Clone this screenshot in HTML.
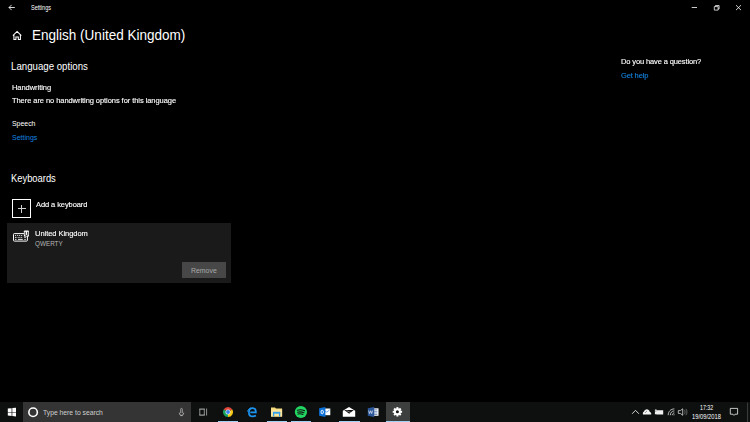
<!DOCTYPE html>
<html><head><meta charset="utf-8">
<style>
html,body{margin:0;padding:0;}
body{width:750px;height:422px;background:#000;position:relative;overflow:hidden;font-family:"Liberation Sans",sans-serif;color:#fff;}
.a{position:absolute;white-space:nowrap;line-height:1;}
[id^=t_]{will-change:transform;-webkit-text-stroke:0.12px currentColor;}
#t_title,#t_langopt,#t_kb{-webkit-text-stroke:0;will-change:auto;}
#t_speech,#t_sset,#t_rm,#t_search,#t_qw,#t_settings,#t_time,#t_date{will-change:auto;-webkit-text-stroke:0;}
svg.a{overflow:visible;}
</style></head><body>
<!-- title bar -->
<svg class="a" style="left:0;top:0" width="750" height="16">
 <path d="M9 7.5H14.8M11.6 4.9L9 7.5L11.6 10.1" stroke="#fff" stroke-width="0.85" fill="none"/>
 <path d="M691.7 7.5H697" stroke="#fff" stroke-width="0.8"/>
 <path d="M714.3 6.6H718.1V10.1H714.3Z M715.5 6.6V5.5H719.1V9H718.1" stroke="#fff" stroke-width="0.75" fill="none"/>
 <path d="M736 5.2L741 10.1M741 5.2L736 10.1" stroke="#fff" stroke-width="0.8"/>
</svg>
<!-- home icon -->
<svg class="a" style="left:0;top:0" width="40" height="50">
 <path d="M12.9 35.7L17.1 31.5L21.3 35.7M13.9 34.8V39.5H15.9V37H18.3V39.5H20.4V34.8" stroke="#fff" stroke-width="1.05" fill="none" stroke-linejoin="miter"/>
</svg>
<!-- add keyboard box -->
<div class="a" style="left:12px;top:199px;width:16.8px;height:17px;border:1.5px solid #fff"></div>
<div class="a" style="left:17.8px;top:208.4px;width:7.9px;height:1px;background:#d0d0d0"></div>
<div class="a" style="left:21.3px;top:205px;width:1px;height:7.6px;background:#d0d0d0"></div>
<!-- card -->
<div class="a" style="left:7px;top:223px;width:223.8px;height:59.7px;background:#1a1a1a"></div>
<svg class="a" style="left:0;top:0" width="40" height="250">
 <rect x="13.5" y="233.6" width="13.9" height="7.5" rx="0.8" stroke="#fff" stroke-width="1" fill="none"/>
 <path d="M23.9 236.6V231.3Q23.9 230.4 24.8 230.4H28Q28.9 230.4 28.9 231.3V236.6Z" fill="#fff"/>
 <path d="M25.2 231.8V234.6Q25.2 235.4 26 235.4H26.9Q27.7 235.4 27.7 234.6V231.8" stroke="#000" stroke-width="0.85" fill="none"/>
 <path d="M15.1 235.5h1M17.2 235.5h1M19.2 235.5h1M21.2 235.5h1M15 237.4h1.5M17.7 237.4h1M19.4 237.4h1M21.2 237.4h1M24.3 237.4h1.5M15 239.4h1.5M18 239.4h4.8M24.3 239.4h1.5" stroke="#fff" stroke-width="0.9"/>
</svg>
<div class="a" style="left:181.9px;top:262.1px;width:44.1px;height:15.9px;background:#474747"></div>
<!-- taskbar -->
<div class="a" style="left:0;top:402.3px;width:750px;height:19.7px;background:#0e1010"></div>
<div class="a" style="left:22.9px;top:402.3px;width:168.6px;height:19.7px;background:#343434"></div>
<div class="a" style="left:386px;top:402.3px;width:24px;height:19.7px;background:#3d3f3f"></div>
<!-- underlines -->
<div class="a" style="left:218px;top:420.8px;width:20.3px;height:1.2px;background:#a0d0f2"></div>
<div class="a" style="left:267px;top:420.8px;width:19.6px;height:1.2px;background:#a0d0f2"></div>
<div class="a" style="left:290.9px;top:420.8px;width:20.2px;height:1.2px;background:#a0d0f2"></div>
<div class="a" style="left:338.9px;top:420.8px;width:20.8px;height:1.2px;background:#a0d0f2"></div>
<div class="a" style="left:386px;top:420.8px;width:24px;height:1.2px;background:#a0d0f2"></div>
<div class="a" id="t_settings" style="left:30.5px;top:4.51px;font-size:6.6px;transform:scaleX(0.84);transform-origin:0 0;">Settings</div>
<div class="a" id="t_title" style="left:31.8px;top:27.98px;font-size:14.2px;transform:scaleX(0.953);transform-origin:0 0;">English (United Kingdom)</div>
<div class="a" id="t_langopt" style="left:11.3px;top:62.26px;font-size:10.2px;transform:scaleX(0.949);transform-origin:0 0;">Language options</div>
<div class="a" id="t_hand" style="left:11.9px;top:83.95px;font-size:7.5px;letter-spacing:-0.053px;">Handwriting</div>
<div class="a" id="t_nohand" style="left:12.1px;top:96.65px;font-size:7.5px;letter-spacing:-0.064px;">There are no handwriting options for this language</div>
<div class="a" id="t_speech" style="left:11.9px;top:120.15px;font-size:7.5px;transform:scaleX(0.921);transform-origin:0 0;">Speech</div>
<div class="a" id="t_sset" style="left:11.9px;top:133.75px;font-size:7.5px;transform:scaleX(0.934);transform-origin:0 0;color:#1283e0;">Settings</div>
<div class="a" id="t_kb" style="left:11px;top:173.96px;font-size:10.2px;transform:scaleX(0.92);transform-origin:0 0;">Keyboards</div>
<div class="a" id="t_add" style="left:36.1px;top:200.65px;font-size:7.5px;letter-spacing:-0.09px;">Add a keyboard</div>
<div class="a" id="t_uk" style="left:34.7px;top:230.05px;font-size:7.5px;letter-spacing:-0.04px;">United Kingdom</div>
<div class="a" id="t_qw" style="left:34.7px;top:239.65px;font-size:7.5px;transform:scaleX(0.845);transform-origin:0 0;color:#b4b4b4;">QWERTY</div>
<div class="a" id="t_rm" style="left:190.9px;top:266.65px;font-size:7.5px;transform:scaleX(0.921);transform-origin:0 0;color:#a8a8a8;">Remove</div>
<div class="a" id="t_q" style="left:621.2px;top:58.15px;font-size:7.5px;letter-spacing:-0.127px;">Do you have a question?</div>
<div class="a" id="t_help" style="left:621.2px;top:72.05px;font-size:7.5px;letter-spacing:-0.14px;color:#1283e0;">Get help</div>
<div class="a" id="t_search" style="left:43.2px;top:408.55px;font-size:7.5px;transform:scaleX(0.903);transform-origin:0 0;color:#cfcfcf;">Type here to search</div>
<div class="a" id="t_time" style="left:699.7px;top:405.31px;font-size:6.6px;transform:scaleX(0.8);transform-origin:0 0;">17:32</div>
<div class="a" id="t_date" style="left:691.9px;top:414.01px;font-size:6.6px;transform:scaleX(0.874);transform-origin:0 0;">19/09/2018</div><svg class="a" style="left:0;top:0" width="750" height="422">
 <!-- windows logo -->
 <path d="M7.8 408.6L11.6 408.2V411.9H7.8Z M12.3 408.1L16 407.8V411.9H12.3Z M7.8 412.6H11.6V416L7.8 415.6Z M12.3 412.6H16V416.4L12.3 416Z" fill="#fff"/>
 <!-- cortana -->
 <circle cx="33.1" cy="412.3" r="4.25" stroke="#fff" stroke-width="1.6" fill="none"/>
 <!-- mic -->
 <path d="M180.7 413.2V409.2Q180.7 408.4 181.5 408.4Q182.3 408.4 182.3 409.2V413.2" stroke="#a8a8a8" stroke-width="0.9" fill="none"/>
 <path d="M179.2 412.6Q179.2 415.3 181.5 415.3Q183.8 415.3 183.8 412.6" stroke="#a8a8a8" stroke-width="0.9" fill="none"/>
 <path d="M180.3 415.6H182.7" stroke="#b8b8b8" stroke-width="0.9"/>
 <!-- task view -->
 <path d="M199.3 409.1H204.8M199.3 415.1H204.8" stroke="#d0d0d0" stroke-width="0.9" fill="none"/>
 <path d="M199.8 409.2V415M204.3 409.2V415M206.6 408.5V415.5" stroke="#b8b8b8" stroke-width="0.75" fill="none"/>
 <!-- chrome -->
 <g transform="translate(228 412)">
  <path d="M0 0L-4.42 -2.55A5.1 5.1 0 0 1 4.42 -2.55Z" fill="#e0483b"/>
  <path d="M0 0L4.42 -2.55A5.1 5.1 0 0 1 0 5.1Z" fill="#f6c813"/>
  <path d="M0 0L0 5.1A5.1 5.1 0 0 1 -4.42 -2.55Z" fill="#1aa260"/>
  <circle r="2.5" fill="#f4f4f4"/>
  <circle r="1.95" fill="#3b82f0"/>
 </g>
 <!-- edge -->
 <path d="M255.9 415.5C255 416.1 253.9 416.4 252.7 416.4C250.3 416.4 248.9 414.7 248.9 412.4C248.9 409.8 250.6 408.2 252.6 408.2C254.7 408.2 255.9 409.7 255.9 412.4H250.3" stroke="#1c95f2" stroke-width="1.7" fill="none"/>
 <path d="M247.4 411.6C247.9 409.6 249.4 408.3 251 408.1" stroke="#1c95f2" stroke-width="0.9" fill="none"/>
 <!-- explorer -->
 <path d="M271 407.6H275L276 408.6H282.1V416.6H271Z" fill="#f3d77a"/>
 <path d="M271 409.6H282.1V416.6H271Z" fill="#fde49b"/>
 <path d="M273.6 416.6V412.8H279.6V416.6" stroke="#33a0ec" stroke-width="1.3" fill="none"/>
 <path d="M273 412.6H280.2" stroke="#33a0ec" stroke-width="1.6" />
 <!-- spotify -->
 <circle cx="300.9" cy="412" r="6.1" fill="#22d863"/>
 <path d="M297.3 410.2C299.5 409.5 302.3 409.6 304.6 410.7M297.6 412.2C299.5 411.7 301.9 411.8 303.9 412.7M298 414C299.6 413.6 301.4 413.7 303 414.4" stroke="#111" stroke-width="1.1" fill="none" stroke-linecap="round"/>
 <!-- outlook -->
 <path d="M323.5 408.5H330.3V415.2H323.5Z" fill="#fff"/>
 <path d="M324.2 410.3L326.8 412.2L329.6 409.8" stroke="#2a7de1" stroke-width="0.7" fill="none"/>
 <path d="M319.1 408.3L325.4 407V417L319.1 415.8Z" fill="#0a6fd6"/>
 <ellipse cx="322.2" cy="412" rx="1.2" ry="1.8" stroke="#fff" stroke-width="0.9" fill="none"/>
 <!-- mail -->
 <path d="M342.8 410.8L349 407.1L355.2 410.8V416.8H342.8Z" fill="#fff"/>
 <path d="M344.2 410.1H353.8L349.2 413.7Z" fill="#111"/>
 <path d="M346.5 410.6L351.8 413" stroke="#ddd" stroke-width="0.5"/>
 <!-- word -->
 <path d="M372.5 408.3H378.5V415.8H372.5Z" fill="#fff"/>
 <path d="M373.6 409.8H377.4M373.6 411.4H377.4M373.6 413H377.4M373.6 414.5H377.4" stroke="#2b579a" stroke-width="0.6"/>
 <path d="M367.8 408.3L374.2 407V417L367.8 415.8Z" fill="#2b579a"/>
 <path d="M368.6 410.5L369.5 413.6L370.6 410.8L371.7 413.6L372.6 410.5" stroke="#fff" stroke-width="0.6" fill="none"/>
 <!-- gear -->
 <g transform="translate(397.4 411.8)">
  <circle r="3.5" fill="#fff"/>
  <g fill="#fff">
   <rect x="-1" y="-4.7" width="2" height="9.4"/>
   <rect x="-1" y="-4.7" width="2" height="9.4" transform="rotate(45)"/>
   <rect x="-1" y="-4.7" width="2" height="9.4" transform="rotate(90)"/>
   <rect x="-1" y="-4.7" width="2" height="9.4" transform="rotate(135)"/>
  </g>
  <circle r="1.5" fill="#151515"/>
 </g>
 <!-- tray -->
 <path d="M632.1 413.8L635.5 410.3L638.9 413.8" stroke="#e0e0e0" stroke-width="0.95" fill="none"/>
 <path d="M643 414.6H651.2C651.5 413.3 650.8 412.3 649.8 412.1C649.4 410.2 647.9 409.2 646.3 409.4C645 409.6 644.2 410.5 644 411.6C643 412 642.6 413.6 643 414.6Z" fill="#f4f4f4"/>
 <circle cx="645.3" cy="412.3" r="0.45" fill="#333"/><circle cx="646.5" cy="411.3" r="0.45" fill="#333"/>
 <path d="M654.9 409.4H656.6V410.2H663.2V414.6H656.4V414.2H654.9Z" fill="#f0f0f0"/>
 <path d="M654.9 411.1H656.4" stroke="#333" stroke-width="0.5"/>
 <path d="M668.2 415.2C668.2 411.5 670.8 408.9 674.4 408.9M670.3 415.2C670.3 412.7 672 410.9 674.4 410.9M672.3 415.2C672.3 413.9 673.2 412.9 674.4 412.9" stroke="#e0e0e0" stroke-width="0.8" fill="none"/>
 <circle cx="674" cy="414.8" r="0.5" fill="#fff"/>
 <path d="M678.3 410.6H680.3L682.7 408.8V415.3L680.3 413.4H678.3Z" stroke="#d8d8d8" stroke-width="0.8" fill="none"/>
 <path d="M684.3 409.8C685.3 410.9 685.3 413.2 684.3 414.3M685.9 408.9C687.3 410.5 687.3 413.6 685.9 415.2" stroke="#9a9a9a" stroke-width="0.6" fill="none"/>
 <path d="M730.3 408.4H737.6V414.2H735L734 415.4L733 414.2H730.3Z" stroke="#f0f0f0" stroke-width="0.8" fill="none"/>
 <path d="M747.6 402.5V422" stroke="#555" stroke-width="0.7"/>
</svg>
</body></html>
